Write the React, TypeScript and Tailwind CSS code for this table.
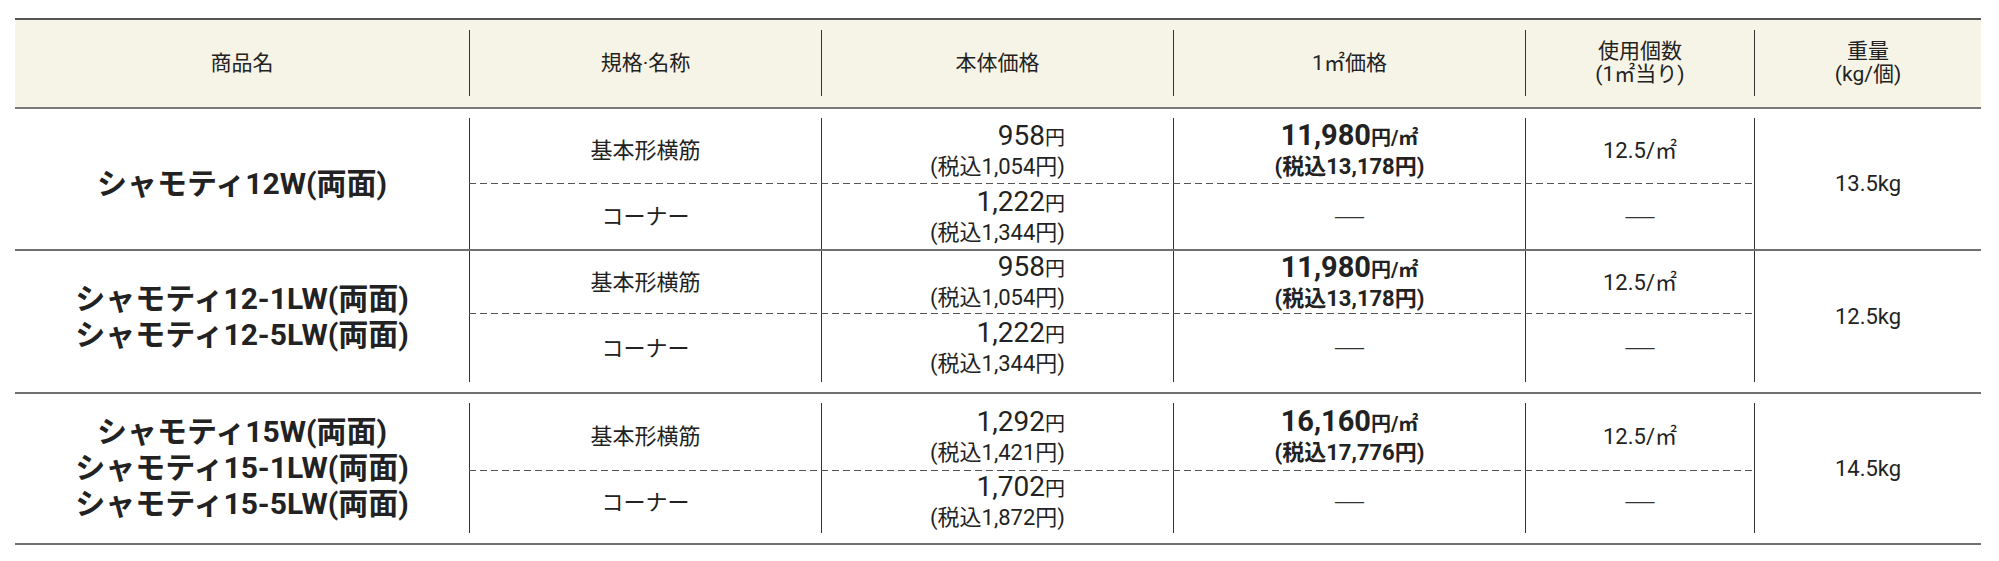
const COLS = "grid grid-cols-[454px_352px_352px_352px_229px_227px]";

type Price = { main: string; tax: string };

function PriceCell({ p }: { p: Price }) {
  return (
    <div className="flex items-center justify-center border-l border-[#333]">
      <div className="text-right">
        <div className="leading-[28px]">
          <span className="text-[28px]">{p.main}</span>
          <span className="text-[20px]">円</span>
        </div>
        <div className="text-[22px] leading-[26px]">({p.tax})</div>
      </div>
    </div>
  );
}

function M2Cell({ main, tax }: { main: string; tax: string }) {
  return (
    <div className="flex items-center justify-center border-l border-[#333] font-bold">
      <div className="text-center">
        <div className="leading-[28px]">
          <span className="text-[29px]">{main}</span>
          <span className="text-[20px]">円/㎡</span>
        </div>
        <div className="text-[22px] leading-[26px]">({tax})</div>
      </div>
    </div>
  );
}

function Dash() {
  return (
    <div className="flex items-center justify-center border-l border-[#333]">
      <span className="font-['Noto_Sans_CJK_JP',sans-serif] text-[34px] font-light leading-none text-[#333]">―</span>
    </div>
  );
}

function DashRow() {
  return (
    <div className="col-span-4 bg-[image:repeating-linear-gradient(to_right,#555_0px,#555_7px,transparent_7px,transparent_11px)]" />
  );
}

type BlockProps = {
  wrap: string;
  rows: string;
  names: string[];
  base: Price;
  corner: Price;
  m2: { main: string; tax: string };
  weight: string;
};

function Block({ wrap, rows, names, base, corner, m2, weight }: BlockProps) {
  return (
    <div className={wrap}>
      <div className={`${COLS} ${rows}`}>
        <div className="row-span-3 flex flex-col items-center justify-center text-[30px] font-bold leading-[36px]">
          {names.map((n) => (
            <div key={n}>{n}</div>
          ))}
        </div>
        <div className="flex items-center justify-center border-l border-[#333] text-[22px]">基本形横筋</div>
        <PriceCell p={base} />
        <M2Cell main={m2.main} tax={m2.tax} />
        <div className="flex items-center justify-center border-l border-[#333] text-[22px]">12.5/㎡</div>
        <div className="row-span-3 flex items-center justify-center border-l border-[#333] text-[22px]">{weight}</div>
        <DashRow />
        <div className="flex items-center justify-center border-l border-[#333] text-[22px]">コーナー</div>
        <PriceCell p={corner} />
        <Dash />
        <Dash />
      </div>
    </div>
  );
}

export default function App() {
  return (
    <div className="h-[561px] w-[1999px] bg-white pl-[15px] pt-[18px] font-['Roboto','Noto_Sans_CJK_JP',sans-serif] text-[#222]">
      <div className="w-[1966px]">
        <div className="border-b-2 border-t-2 border-b-[#7a7a7a] border-t-[#555] bg-[#f6f4e7] pb-[11px] pt-[10px]">
          <div className={`${COLS} h-[66px] text-[21px] leading-[23px]`}>
            <div className="flex items-center justify-center">商品名</div>
            <div className="flex items-center justify-center border-l border-[#333]">規格·名称</div>
            <div className="flex items-center justify-center border-l border-[#333]">本体価格</div>
            <div className="flex items-center justify-center border-l border-[#333]">1㎡価格</div>
            <div className="flex flex-col items-center justify-center border-l border-[#333] text-center">
              <div>使用個数</div>
              <div>(1㎡当り)</div>
            </div>
            <div className="flex flex-col items-center justify-center border-l border-[#333] text-center">
              <div>重量</div>
              <div>(kg/個)</div>
            </div>
          </div>
        </div>

        <Block
          wrap="border-b-2 border-[#707070] pt-[9px]"
          rows="grid-rows-[65px_1px_65px]"
          names={["シャモティ12W(両面)"]}
          base={{ main: "958", tax: "税込1,054円" }}
          corner={{ main: "1,222", tax: "税込1,344円" }}
          m2={{ main: "11,980", tax: "税込13,178円" }}
          weight="13.5kg"
        />
        <Block
          wrap="border-b-2 border-[#707070] pb-[10px]"
          rows="grid-rows-[62px_1px_68px]"
          names={["シャモティ12-1LW(両面)", "シャモティ12-5LW(両面)"]}
          base={{ main: "958", tax: "税込1,054円" }}
          corner={{ main: "1,222", tax: "税込1,344円" }}
          m2={{ main: "11,980", tax: "税込13,178円" }}
          weight="12.5kg"
        />
        <Block
          wrap="border-b-2 border-[#707070] pb-[10px] pt-[9px]"
          rows="grid-rows-[67px_1px_62px]"
          names={["シャモティ15W(両面)", "シャモティ15-1LW(両面)", "シャモティ15-5LW(両面)"]}
          base={{ main: "1,292", tax: "税込1,421円" }}
          corner={{ main: "1,702", tax: "税込1,872円" }}
          m2={{ main: "16,160", tax: "税込17,776円" }}
          weight="14.5kg"
        />
      </div>
    </div>
  );
}
